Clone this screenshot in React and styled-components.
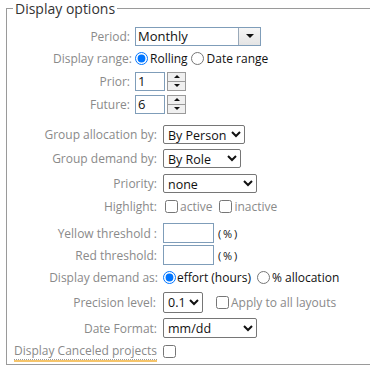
import React from "react";
import styled, { createGlobalStyle } from "styled-components";

const Global = createGlobalStyle`
  html, body { margin: 0; padding: 0; background: #fff; }
  body { font-family: "Open Sans", "Noto Sans", sans-serif; font-size: 12px; color: #222; }
`;

const Page = styled.div`
  width: 370px;
  height: 375px;
  overflow: hidden;
  padding: 0 0 0 6px;
  box-sizing: border-box;
`;

const Fieldset = styled.fieldset`
  margin: 0;
  width: 380px;
  height: 365px;
  box-sizing: border-box;
  border: 1px solid #9a9a9a;
  border-right: none;
  padding: 0 0 0 7px;
`;

const Legend = styled.legend`
  font-size: 14px;
  color: #333;
  padding: 0 2px;
  margin-left: -1px;
  line-height: 17px;
`;

const Row = styled.div`
  display: flex;
  align-items: center;
  height: 20px;
  margin-top: ${(p) => p.$mt || 0}px;
  white-space: nowrap;
`;

const Label = styled.label`
  box-sizing: border-box;
  width: ${(p) => p.$w}px;
  text-align: right;
  color: #8a8a8a;
  padding-right: ${(p) => p.$pr ?? 5}px;
  flex: none;
`;

const LinkLabel = styled.span`
  color: #8a8a8a;
  border-bottom: 1px dotted #999;
  box-shadow: 0 2px 0 #f5c46a;
  line-height: 16px;
  margin-right: 6px;
`;

const ComboBox = styled.div`
  display: flex;
  width: 126px;
  height: 19px;
  box-sizing: border-box;
  border: 1px solid #7f9db9;
  color: #111;
`;

const ComboText = styled.span`
  flex: 1;
  padding-left: 2px;
  line-height: 17px;
  font-size: 13px;
`;

const ComboButton = styled.span`
  width: 21px;
  border-left: 1px solid #9aa9b9;
  background: linear-gradient(#f6f6f6, #e4e4e4);
  display: flex;
  align-items: center;
  justify-content: center;
`;

const TriDown = styled.span`
  width: 0;
  height: 0;
  border-left: ${(p) => p.$s}px solid transparent;
  border-right: ${(p) => p.$s}px solid transparent;
  border-top: ${(p) => p.$s}px solid #111;
`;

const TriUp = styled(TriDown)`
  border-top: none;
  border-bottom: ${(p) => p.$s}px solid #111;
`;

const TextBox = styled.input`
  box-sizing: border-box;
  width: ${(p) => p.$w}px;
  height: ${(p) => p.$h || 19}px;
  border: 1px solid #7f9db9;
  padding: 0 2px;
  margin: 0;
  font-family: inherit;
  font-size: 13px;
  color: #111;
  outline: none;
`;

const Spinner = styled.div`
  display: flex;
  flex-direction: column;
  width: 19px;
  height: 19px;
  box-sizing: border-box;
  border: 1px solid #9a9a9a;
  margin-left: 2px;
`;

const SpinHalf = styled.span`
  flex: 1;
  display: flex;
  align-items: center;
  justify-content: center;
  background: #f0f0f0;
  & + & { border-top: 1px solid #9a9a9a; }
`;

const Select = styled.select`
  box-sizing: border-box;
  width: ${(p) => p.$w}px;
  height: ${(p) => p.$h || 19}px;
  margin: 0;
  font-family: inherit;
  font-size: 12.5px;
  color: #111;
  padding: 0;
  border: 1px solid #767676;
  border-radius: 2px;
  background: #fff;
`;

const Radio = styled.input.attrs({ type: "radio" })`
  margin: 0 ${(p) => p.$mr ?? 2}px 0 ${(p) => p.$ml ?? 2}px;
  width: 13px;
  height: 13px;
`;

const Check = styled.input.attrs({ type: "checkbox" })`
  margin: 0 ${(p) => p.$mr ?? 2}px 0 ${(p) => p.$ml ?? 2}px;
  width: 13px;
  height: 13px;
`;

const Value = styled.span`
  color: ${(p) => (p.$muted ? "#8a8a8a" : "#111")};
  font-size: 12px;
`;

const Unit = styled.span`
  color: #111;
  font-size: 11px;
  margin-left: 4px;
  letter-spacing: -0.5px;
`;

const Gap = styled.span`
  width: ${(p) => p.$w}px;
  flex: none;
`;

export default function App() {
  const W1 = 121;
  const W2 = 149;
  return (
    <Page>
      <Global />
      <Fieldset>
        <Legend>Display options</Legend>
        <Row $mt={9}>
          <Label $w={W1}>Period:</Label>
          <ComboBox>
            <ComboText>Monthly</ComboText>
            <ComboButton>
              <TriDown $s={4} />
            </ComboButton>
          </ComboBox>
        </Row>
        <Row $mt={2}>
          <Label $w={W1} $pr={3}>Display range:</Label>
          <Radio name="range" defaultChecked $ml={0} $mr={2} />
          <Value>Rolling</Value>
          <Radio name="range" $ml={3} $mr={3} />
          <Value>Date range</Value>
        </Row>
        <Row $mt={3}>
          <Label $w={W1}>Prior:</Label>
          <TextBox $w={30} defaultValue="1" />
          <Spinner>
            <SpinHalf><TriUp $s={3} /></SpinHalf>
            <SpinHalf><TriDown $s={3} /></SpinHalf>
          </Spinner>
        </Row>
        <Row $mt={3}>
          <Label $w={W1}>Future:</Label>
          <TextBox $w={30} defaultValue="6" />
          <Spinner>
            <SpinHalf><TriUp $s={3} /></SpinHalf>
            <SpinHalf><TriDown $s={3} /></SpinHalf>
          </Spinner>
        </Row>
        <Row $mt={10}>
          <Label $w={W2} $pr={6}>Group allocation by:</Label>
          <Select $w={82} defaultValue="p">
            <option value="p">By Person</option>
          </Select>
        </Row>
        <Row $mt={4}>
          <Label $w={W2} $pr={6}>Group demand by:</Label>
          <Select $w={78} defaultValue="r">
            <option value="r">By Role</option>
          </Select>
        </Row>
        <Row $mt={5}>
          <Label $w={W2} $pr={6}>Priority:</Label>
          <Select $w={94} defaultValue="n">
            <option value="n">none</option>
          </Select>
        </Row>
        <Row $mt={3}>
          <Label $w={W2} $pr={6}>Highlight:</Label>
          <Check $ml={2} $mr={2} />
          <Value $muted>active</Value>
          <Check $ml={7} $mr={2} />
          <Value $muted>inactive</Value>
        </Row>
        <Row $mt={7}>
          <Label $w={W2} $pr={6}>Yellow threshold :</Label>
          <TextBox $w={51} $h={20} />
          <Unit>( % )</Unit>
        </Row>
        <Row $mt={2}>
          <Label $w={W2} $pr={6}>Red threshold:</Label>
          <TextBox $w={51} $h={20} />
          <Unit>( % )</Unit>
        </Row>
        <Row $mt={2}>
          <Label $w={W2} $pr={5}>Display demand as:</Label>
          <Radio name="dem" defaultChecked $ml={0} $mr={1} />
          <Value>effort (hours)</Value>
          <Radio name="dem" $ml={6} $mr={2} />
          <Value>% allocation</Value>
        </Row>
        <Row $mt={5}>
          <Label $w={W2} $pr={7}>Precision level:</Label>
          <Select $w={40} $h={21} defaultValue="1">
            <option value="1">0.1</option>
          </Select>
          <Gap $w={11} />
          <Check $ml={2} $mr={2} />
          <Value $muted>Apply to all layouts</Value>
        </Row>
        <Row $mt={6}>
          <Label $w={W2} $pr={6}>Date Format:</Label>
          <Select $w={94} $h={20} defaultValue="m">
            <option value="m">mm/dd</option>
          </Select>
        </Row>
        <Row $mt={3}>
          <LinkLabel>Display Canceled projects</LinkLabel>
          <Check $ml={0} />
        </Row>
      </Fieldset>
    </Page>
  );
}
